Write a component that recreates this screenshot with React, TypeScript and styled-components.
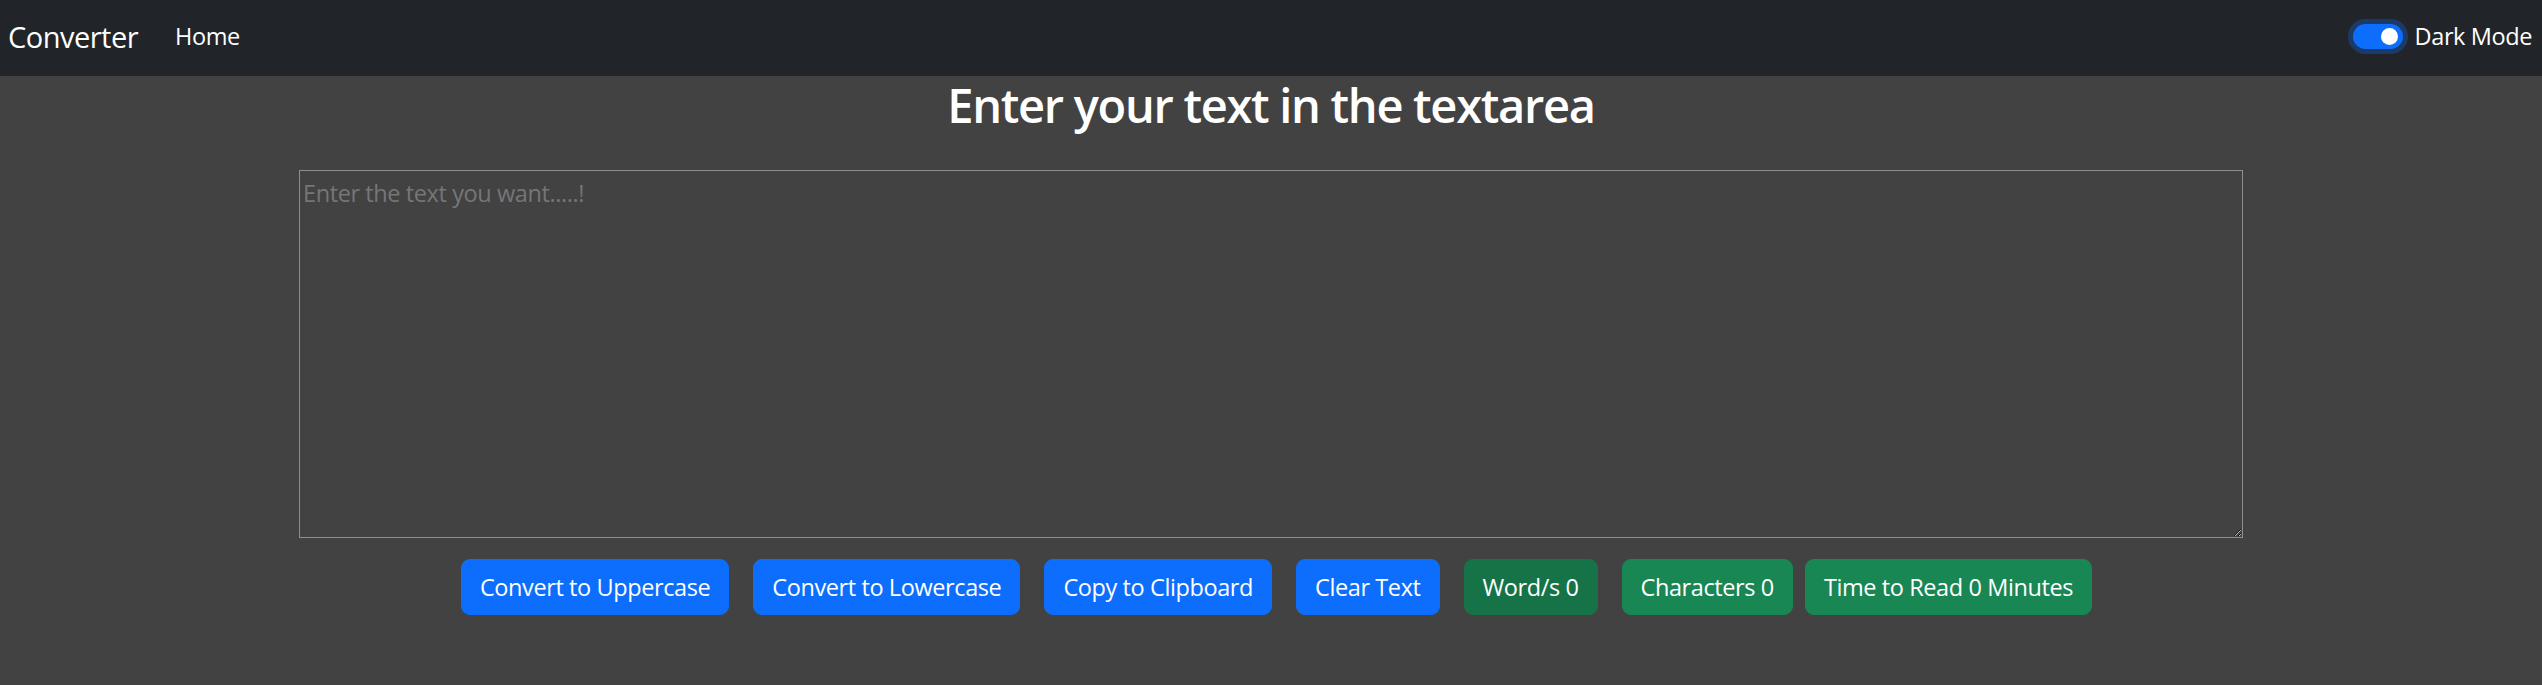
import React, { useState } from "react";
import styled, { createGlobalStyle } from "styled-components";

const GlobalStyle = createGlobalStyle`
  html, body {
    margin: 0;
    padding: 0;
    background: #424242;
    font-family: "Open Sans", "Noto Sans", sans-serif;
    color: #ffffff;
  }
  * { box-sizing: border-box; }
`;

const Navbar = styled.nav`
  display: flex;
  align-items: center;
  height: 76px;
  padding: 0 10px 4px 8px;
  background: #212529;
`;

const Brand = styled.a`
  font-size: 29px;
  letter-spacing: -0.5px;
  line-height: 45px;
  color: #ffffff;
  text-decoration: none;
  margin-right: 37px;
`;

const NavLink = styled.a`
  font-size: 23.5px;
  letter-spacing: -0.4px;
  line-height: 36px;
  color: #ffffff;
  text-decoration: none;
`;

const Spacer = styled.div`
  flex: 1;
`;

const SwitchLabel = styled.label`
  display: flex;
  align-items: center;
  gap: 12px;
  font-size: 23.5px;
  letter-spacing: -0.4px;
  line-height: 36px;
  color: #ffffff;
  cursor: pointer;
`;

const SwitchTrack = styled.span<{ $on: boolean }>`
  display: flex;
  align-items: center;
  justify-content: ${(p) => (p.$on ? "flex-end" : "flex-start")};
  width: 50px;
  height: 25px;
  padding: 0 5px;
  border-radius: 13px;
  background: ${(p) => (p.$on ? "#0d6efd" : "#6c757d")};
  box-shadow: 0 0 0 5px rgba(13, 110, 253, 0.3);
`;

const Knob = styled.span`
  width: 17px;
  height: 17px;
  border-radius: 50%;
  background: #ffffff;
`;

const Container = styled.main`
  width: 1944px;
  margin: 0 auto;
`;

const Heading = styled.h2`
  margin: 1px 0 0;
  text-align: center;
  font-size: 47px;
  letter-spacing: -1.3px;
  font-weight: 600;
  line-height: 57px;
  color: #ffffff;
`;

const TextBox = styled.textarea`
  display: block;
  width: 1944px;
  height: 368px;
  margin: 36px 0 0;
  padding: 4px 3px;
  background: #424242;
  color: #ffffff;
  border: 1px solid #8e8e8e;
  border-radius: 0;
  font-family: "Open Sans", "Noto Sans", sans-serif;
  font-size: 23.5px;
  letter-spacing: -0.4px;
  line-height: 36px;
  outline: none;
  &::placeholder {
    color: #767676;
  }
`;

const ButtonRow = styled.div`
  display: flex;
  justify-content: center;
  align-items: center;
  gap: 24px;
  margin-top: 21px;
  padding-left: 11px;
`;

const StatGroup = styled.div`
  display: flex;
  gap: 12px;
`;

const Button = styled.button<{ $variant: "primary" | "success" | "successActive" }>`
  padding: 9px 18px;
  border: 1px solid
    ${(p) =>
      p.$variant === "primary" ? "#0d6efd" : p.$variant === "success" ? "#198754" : "#157347"};
  border-radius: 9px;
  background: ${(p) =>
    p.$variant === "primary" ? "#0d6efd" : p.$variant === "success" ? "#198754" : "#157347"};
  color: #ffffff;
  font-family: "Open Sans", "Noto Sans", sans-serif;
  font-size: 23.5px;
  letter-spacing: -0.4px;
  line-height: 36px;
  white-space: nowrap;
  cursor: pointer;
`;

export default function App() {
  const [text, setText] = useState("");
  const [dark, setDark] = useState(true);
  const words = text.split(/\s+/).filter((w) => w.length > 0).length;

  return (
    <>
      <GlobalStyle />
      <Navbar>
        <Brand href="#">Converter</Brand>
        <NavLink href="#">Home</NavLink>
        <Spacer />
        <SwitchLabel onClick={() => setDark(!dark)}>
          <SwitchTrack $on={dark}>
            <Knob />
          </SwitchTrack>
          Dark Mode
        </SwitchLabel>
      </Navbar>
      <Container>
        <Heading>Enter your text in the textarea</Heading>
        <TextBox
          value={text}
          onChange={(e) => setText(e.target.value)}
          placeholder="Enter the text you want.....!"
        />
        <ButtonRow>
          <Button $variant="primary" onClick={() => setText(text.toUpperCase())}>
            Convert to Uppercase
          </Button>
          <Button $variant="primary" onClick={() => setText(text.toLowerCase())}>
            Convert to Lowercase
          </Button>
          <Button $variant="primary">Copy to Clipboard</Button>
          <Button $variant="primary" onClick={() => setText("")}>
            Clear Text
          </Button>
          <Button $variant="successActive">Word/s {words}</Button>
          <StatGroup>
            <Button $variant="success">Characters {text.length}</Button>
            <Button $variant="success">Time to Read {Math.round(words * 0.008)} Minutes</Button>
          </StatGroup>
        </ButtonRow>
      </Container>
    </>
  );
}
